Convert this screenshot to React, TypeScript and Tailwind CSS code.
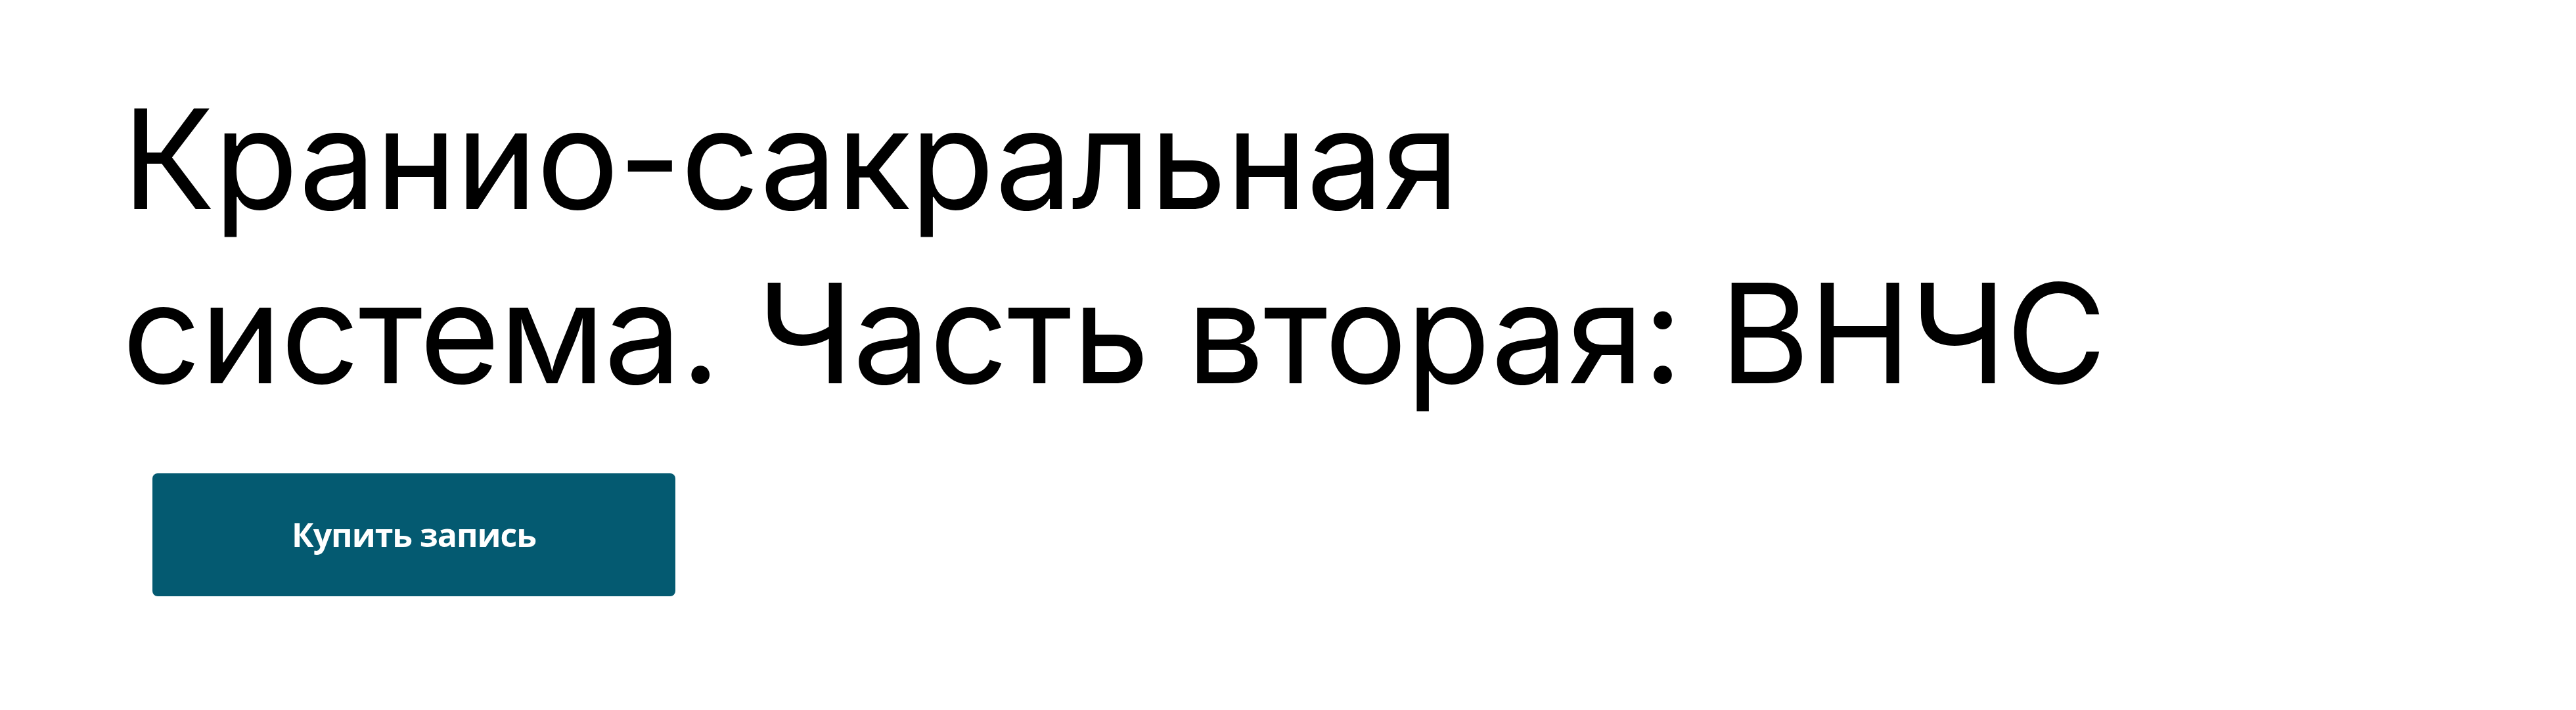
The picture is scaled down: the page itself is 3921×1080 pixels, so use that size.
export default function App() {
  return (
    <div className="min-h-screen bg-white">
      <section className="pl-[186px] pt-[110px]">
        <h1 className="font-['Inter',sans-serif] text-[210px] leading-[265px] font-normal text-black tracking-[-1.5px]">
          Кранио-сакральная
          <br />
          система. Часть вторая: ВНЧС
        </h1>
        <div className="pl-[46px] pt-[80px]">
          <button className="w-[796px] h-[187px] rounded-[8px] bg-[#045a71] text-white font-['Open_Sans',sans-serif] font-bold text-[50px] tracking-[-1px]">
            Купить запись
          </button>
        </div>
      </section>
    </div>
  );
}
